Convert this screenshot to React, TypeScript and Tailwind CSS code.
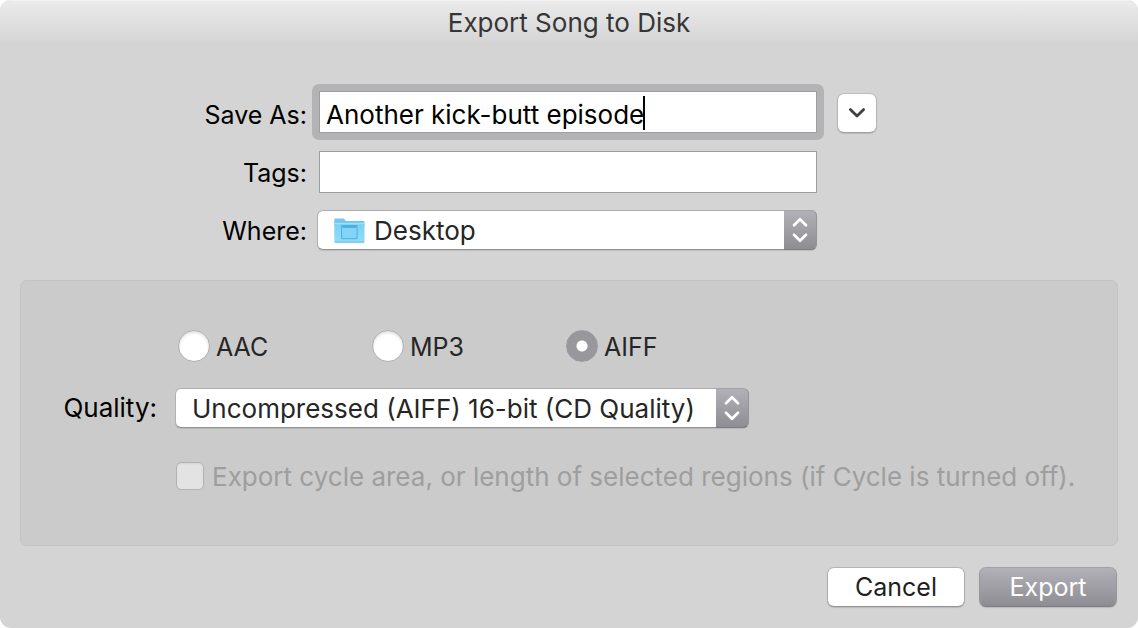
import { useState } from "react";

const DESTINATIONS = ["Desktop", "Documents", "Music"];
const FORMATS = ["AAC", "MP3", "AIFF"];
const QUALITIES = [
  "Uncompressed (AIFF) 16-bit (CD Quality)",
  "Uncompressed (AIFF) 24-bit",
];

function Stepper() {
  return (
    <span className="pointer-events-none absolute inset-y-0 right-0 flex w-[33px] items-center justify-center rounded-r-[6px] border border-l-0 border-t-[#a3a2a7] border-r-[#949398] border-b-[#7d7c82] bg-linear-to-b from-[#b2b1b7] to-[#8e8d93]">
      <svg width="18" height="26" viewBox="0 0 18 26" fill="none" stroke="#fff" strokeWidth="2.7" strokeLinecap="round" strokeLinejoin="round" aria-hidden="true">
        <path d="M3 8.2 9 2.3l6 5.9M3 17.8l6 5.9 6-5.9" />
      </svg>
    </span>
  );
}

function FolderIcon() {
  return (
    <svg className="pointer-events-none absolute top-[8px] left-[17px]" width="31" height="26" viewBox="0 0 31 26" aria-hidden="true">
      <defs>
        <linearGradient id="folder" x1="0" y1="0" x2="0" y2="1">
          <stop offset="0" stopColor="#7bd0f5" />
          <stop offset="1" stopColor="#92dcfa" />
        </linearGradient>
      </defs>
      <path d="M1 24.4h29v.9H1z" fill="#b9c6cc" opacity=".7" />
      <path d="M.3 1.6Q.3.4 1.5.4h7.6q.8 0 1.3.7l.8 1.2q.4.6 1.2.6h16.9q1.2 0 1.2 1.2V8H.3z" fill="#74c8ee" />
      <path d="M.3 5.6h30.2v17.9q0 1-1 1H1.3q-1 0-1-1z" fill="url(#folder)" />
      <path d="M.3 5.7h30.2" stroke="#a9e4fb" strokeWidth="1" />
      <path d="M.8 24h29.4" stroke="#62bbe4" strokeWidth=".9" />
      <path d="M7.6 7.5h15.5v13.2H7.6z" fill="#83d4f8" stroke="#4fb0dc" strokeWidth="1" />
      <path d="M8.4 8.9h13.9" stroke="#45a6d4" strokeWidth="1.6" />
    </svg>
  );
}

const selectStyle =
  "block h-[40px] w-full appearance-none rounded-[6px] border border-t-[#adadad] border-x-[#b2b2b2] border-b-[#949494] bg-white pt-[2px] pr-10 text-[#262626] shadow-[0_1px_1px_rgba(0,0,0,0.1)] outline-none";
const fieldStyle =
  "block h-[42px] w-full border border-[#9e9e9e] bg-white px-[6px] text-black outline-none";

export default function App() {
  const [name, setName] = useState("Another kick-butt episode");
  const [tags, setTags] = useState("");
  const [where, setWhere] = useState(DESTINATIONS[0]);
  const [format, setFormat] = useState("AIFF");
  const [quality, setQuality] = useState(QUALITIES[0]);

  return (
    <div className="min-h-screen bg-white font-['Inter',sans-serif] text-[26px] leading-[30px] text-black">
      <form className="flex min-h-screen flex-col overflow-hidden rounded-[11px] bg-[#d4d4d4]" onSubmit={(e) => e.preventDefault()}>
        <header className="h-[46px] border-t border-[#f5f5f5] bg-linear-to-b from-[#ebebeb] to-[#d3d3d3] pt-[7px] text-center">
          <h1 className="text-[#363636]">Export Song to Disk</h1>
        </header>

        <div className="mt-[45px] mr-[4px] grid grid-cols-[1fr_500px_1fr] items-center gap-x-[10px]">
          <label htmlFor="name" className="mb-[16px] pt-[4px] text-right text-[25px]">Save As:</label>
          <div className="relative -mx-[5px] -mt-[7px] mb-[11px] w-[512px] rounded-[7px] bg-[#b3b3b5] p-[7px]">
            <input id="name" className={`${fieldStyle} pt-[4px] caret-transparent`} value={name} onChange={(e) => setName(e.target.value)} />
            <span className="pointer-events-none absolute top-[12px] left-[331px] h-[34px] w-[2px] bg-black" />
          </div>
          <button type="button" aria-label="Collapse" className="mb-[16px] ml-[10px] flex size-[40px] items-center justify-center rounded-[7px] border border-t-[#bcbcbc] border-x-[#b5b5b5] border-b-[#a0a0a0] bg-white shadow-[0_1px_1px_rgba(0,0,0,0.12)]">
            <svg width="20" height="14" viewBox="0 0 20 14" fill="none" stroke="#3f3f41" strokeWidth="2.8" strokeLinecap="round" strokeLinejoin="round" aria-hidden="true">
              <path d="m3.4 3.6 6.6 6.4 6.6-6.4" />
            </svg>
          </button>

          <label htmlFor="tags" className="mb-[15px] text-right text-[25px]">Tags:</label>
          <div className="mb-[17px] ml-[2px] w-[498px]">
            <input id="tags" className={fieldStyle} value={tags} onChange={(e) => setTags(e.target.value)} />
          </div>
          <span />

          <label htmlFor="where" className="pt-[2px] text-right text-[25px]">Where:</label>
          <div className="relative">
            <select id="where" className={`${selectStyle} pl-[56px]`} value={where} onChange={(e) => setWhere(e.target.value)}>
              {DESTINATIONS.map((d) => <option key={d}>{d}</option>)}
            </select>
            <FolderIcon />
            <Stepper />
          </div>
        </div>

        <section className="mx-[20px] mt-[30px] flex grow flex-col rounded-[7px] border border-[#c3c3c3] bg-[#cbcbcb] pb-[50px]">
          <div role="radiogroup" aria-label="Format" className="mt-[49px] ml-[157px] flex">
            {FORMATS.map((f) => (
              <label key={f} className="flex w-[194px] items-center gap-[6px] text-[25px] text-[#262626]">
                <input
                  type="radio"
                  name="format"
                  checked={format === f}
                  onChange={() => setFormat(f)}
                  className="size-[32px] appearance-none rounded-full border border-[#aeaeae] bg-white shadow-[inset_0_2px_3px_rgba(0,0,0,0.12)] checked:border-[#98979c] checked:bg-[radial-gradient(circle,#fff_5px,#98979c_6px)] checked:shadow-none"
                />
                <span className="pt-[2px]">{f}</span>
              </label>
            ))}
          </div>

          <div className="mt-[26px] flex items-center">
            <label htmlFor="quality" className="w-[136px] text-right">Quality:</label>
            <div className="relative ml-[18px] w-[574px]">
              <select id="quality" className={`${selectStyle} pl-[16px]`} value={quality} onChange={(e) => setQuality(e.target.value)}>
                {QUALITIES.map((q) => <option key={q}>{q}</option>)}
              </select>
              <Stepper />
            </div>
          </div>

          <label className="mt-[32px] ml-[155px] flex items-center gap-[8px] text-[#9e9e9e]">
            <input type="checkbox" disabled className="size-[28px] shrink-0 appearance-none rounded-[5px] border border-[#b3b3b3] bg-[#e3e3e3] shadow-[inset_0_1px_2px_rgba(0,0,0,0.07)]" />
            <span className="pt-[2px]">Export cycle area, or length of selected regions (if Cycle is turned off).</span>
          </label>
        </section>

        <footer className="mt-[21px] mr-[21px] mb-[21px] flex justify-end gap-[14px] text-[25px]">
          <button type="button" className="h-[40px] w-[138px] rounded-[7px] border border-t-[#b5b5b5] border-x-[#adadad] border-b-[#949494] bg-white text-[#1f1f1f] shadow-[0_1px_1px_rgba(0,0,0,0.12)]">Cancel</button>
          <button type="submit" className="h-[40px] w-[138px] rounded-[7px] border border-t-[#a3a2a7] border-x-[#98979c] border-b-[#7d7c82] bg-linear-to-b from-[#b2b1b7] to-[#8e8d93] text-white shadow-[0_1px_1px_rgba(0,0,0,0.12)]">Export</button>
        </footer>
      </form>
    </div>
  );
}
